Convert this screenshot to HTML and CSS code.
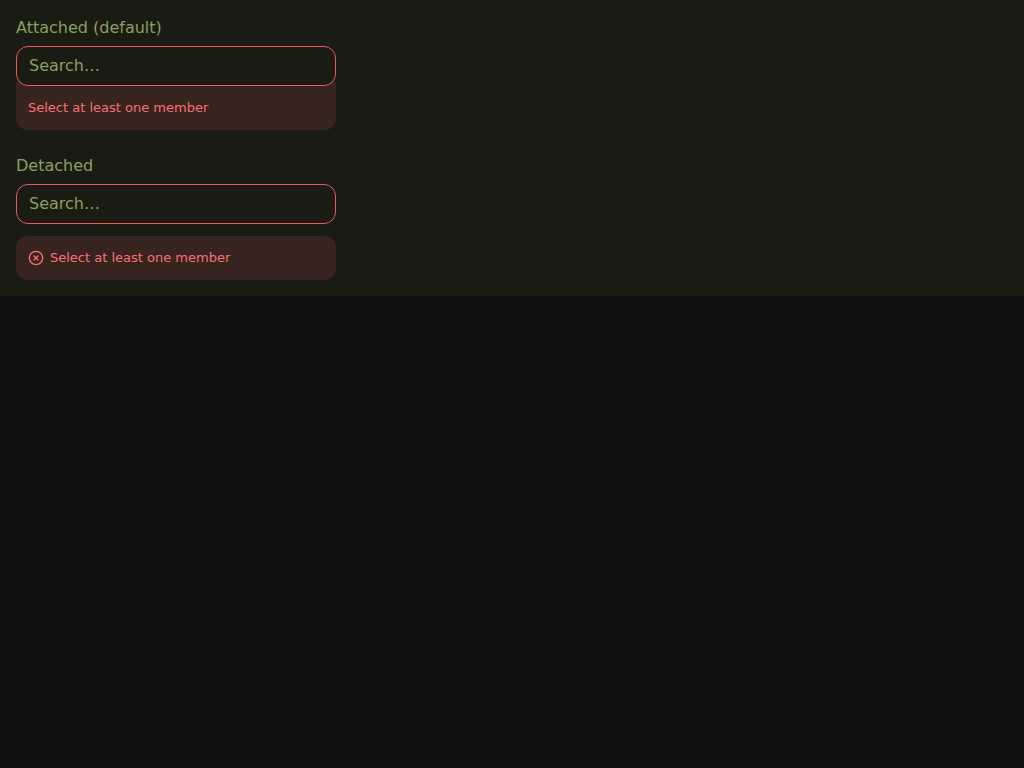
FILE: index.html
```html
<html lang="en">
  <head>
    <meta name="viewport" content="width=device-width, initial-scale=1.0">
    <link rel="stylesheet" href="styles.css">
  </head>
  <body>
    <div class="panel">
      <div class="field">
        <label class="field-label">Attached (default)</label>
        <input class="search-input" type="text" placeholder="Search…">
        <div class="error error-attached">Select at least one member</div>
      </div>
      <div class="field">
        <label class="field-label">Detached</label>
        <input class="search-input" type="text" placeholder="Search…">
        <div class="error error-detached">
          <svg class="error-icon" width="16" height="16" viewBox="0 0 24 24" fill="none" stroke="currentColor" stroke-width="2" stroke-linecap="round" stroke-linejoin="round">
            <circle cx="12" cy="12" r="10"></circle>
            <path d="m15 9-6 6"></path>
            <path d="m9 9 6 6"></path>
          </svg>
          <span>Select at least one member</span>
        </div>
      </div>
    </div>
  </body>
</html>
```

FILE: styles.css
```css
body {
  margin: 0;
  background-color: #111111;
  font-family: "DejaVu Sans", sans-serif;
}

.panel {
  display: flex;
  flex-direction: column;
  gap: 24px;
  padding: 16px;
  background-color: #1a1b13;
}

.field {
  display: flex;
  flex-direction: column;
  width: 320px;
}

.field-label {
  line-height: 24px;
  margin-bottom: 6px;
  font-size: 16px;
  color: #8a9f62;
}

.search-input {
  position: relative;
  z-index: 1;
  box-sizing: border-box;
  height: 40px;
  padding: 0 12px 2px;
  background-color: #1a1b13;
  border: 1px solid #f0565b;
  border-radius: 12px;
  outline: none;
  font-family: inherit;
  font-size: 16px;
}

.search-input::placeholder {
  color: #8a9f62;
  opacity: 1;
}

.error {
  display: flex;
  align-items: center;
  gap: 6px;
  box-sizing: border-box;
  padding: 14px 12px;
  background-color: #38241f;
  border-radius: 12px;
  font-size: 13px;
  line-height: 16px;
  color: #f87171;
}

.error-attached {
  margin-top: -12px;
  padding-top: 26px;
}

.error-detached {
  margin-top: 12px;
}

.error-icon {
  flex-shrink: 0;
}
```
